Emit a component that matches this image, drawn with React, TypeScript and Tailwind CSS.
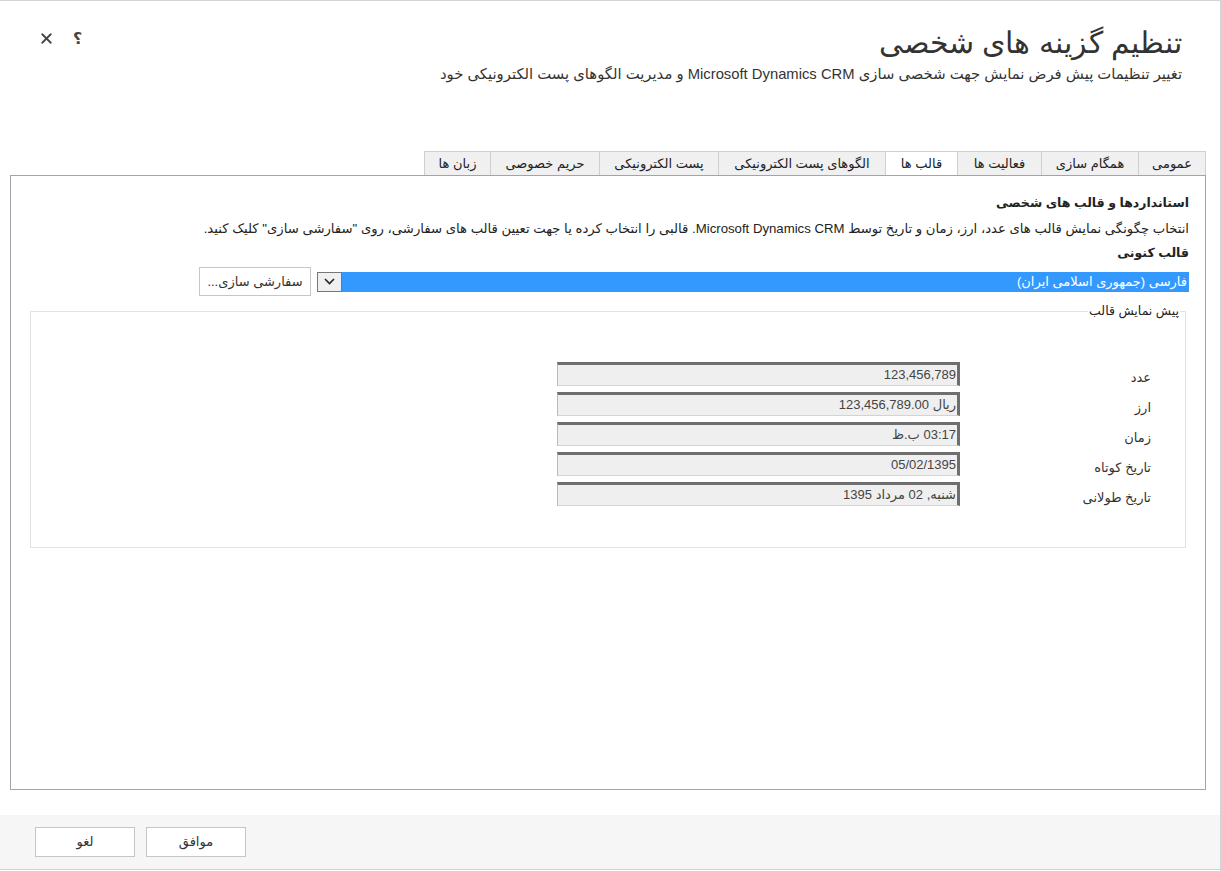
import { X } from "lucide-react";

const tabs = [
  { label: "عمومی", w: "w-[68px]" },
  { label: "همگام سازی", w: "w-[97px]" },
  { label: "فعالیت ها", w: "w-[84px]" },
  { label: "قالب ها", w: "w-[72px]", active: true },
  { label: "الگوهای پست الکترونیکی", w: "w-[167px]" },
  { label: "پست الکترونیکی", w: "w-[119px]" },
  { label: "حریم خصوصی", w: "w-[109px]" },
  { label: "زبان ها", w: "w-[66px]" },
];

const preview = [
  { label: "عدد", value: "123,456,789" },
  { label: "ارز", value: "ریال 123,456,789.00" },
  { label: "زمان", value: "03:17 ب.ظ" },
  { label: "تاریخ کوتاه", value: "05/02/1395" },
  { label: "تاریخ طولانی", value: "شنبه, 02 مرداد 1395" },
];

const App = () => {
  return (
    <div
      dir="rtl"
      className="w-[1221px] h-[871px] bg-white border-t border-r border-[#d4d4d4] text-[#222] overflow-hidden"
      style={{ fontFamily: '"Liberation Sans", "DejaVu Sans", sans-serif' }}
    >
      {/* header */}
      <div className="flex justify-between px-[38px] pt-[22px] h-[150px]">
        <div className="flex flex-col items-start">
          <h1 className="text-[30px] font-extralight leading-[40px] text-[#333]">تنظیم گزینه های شخصی</h1>
          <p className="text-[14.8px] leading-[20px] mt-[1px] text-[#333]">
            تغییر تنظیمات پیش فرض نمایش جهت شخصی سازی Microsoft Dynamics CRM و مدیریت الگوهای پست الکترونیکی خود
          </p>
        </div>
        <div className="flex gap-[18px] pt-[7px] h-fit items-center text-[#444]">
          <span className="text-[16px] font-bold leading-none">؟</span>
          <X size={17} strokeWidth={2.6} />
        </div>
      </div>

      {/* tabs + panel */}
      <div className="pr-[14px]">
        <div className="flex">
          {tabs.map((t) => (
            <div
              key={t.label}
              className={`${t.w} h-[24px] flex items-center justify-center text-[13px] border-t border-l border-[#cfcfcf] first:border-r ${
                t.active ? "bg-white" : "bg-[#f0f0f0]"
              }`}
            >
              {t.label}
            </div>
          ))}
        </div>
        <div className="w-[1196px] h-[615px] border border-[#a3a3ab] pt-[17px] pr-[16px] pl-[19px]">
          <div className="text-[12.5px] font-bold leading-[20px]">استانداردها و قالب های شخصی</div>
          <div className="text-[13.2px] leading-[20px] mt-[6px]">
            انتخاب چگونگی نمایش قالب های عدد، ارز، زمان و تاریخ توسط Microsoft Dynamics CRM. قالبی را انتخاب کرده یا جهت تعیین قالب های سفارشی، روی "سفارشی سازی" کلیک کنید.
          </div>
          <div className="text-[12.5px] font-bold leading-[20px] mt-[4px]">قالب کنونی</div>

          <div className="flex items-center mt-[4px]">
            <div className="w-[847px] h-[20px] bg-[#3399ff] text-white text-[13px] leading-[20px] pr-[2px]">
              فارسی (جمهوری اسلامی ایران)
            </div>
            <div className="w-[25px] h-[20px] border border-[#777] bg-[#f0f0f0] flex items-center justify-center">
              <svg width="11" height="7" viewBox="0 0 11 7">
                <path d="M1 1 L5.5 5.5 L10 1" fill="none" stroke="#222" strokeWidth="1.6" />
              </svg>
            </div>
            <button className="w-[112px] h-[29px] mr-[6px] border border-[#c6c6c6] bg-white text-[13px] text-[#333]">
              سفارشی سازی...
            </button>
          </div>

          <fieldset className="mt-[7px] mr-[3px] w-[1156px] h-[245px] border border-[#e2e2e2] pr-[6px]">
            <legend className="text-[12.5px] leading-[16px] px-[1px] mr-[-1px] bg-white">پیش نمایش قالب</legend>
            <div className="flex flex-col gap-[6px] mt-[43px]">
              {preview.map((r) => (
                <div key={r.label} className="flex h-[24px]">
                  <div className="w-[219px] pr-[28px] text-[13px] leading-[16px] pt-[8px] text-[#333]">{r.label}</div>
                  <div className="w-[403px] h-[24px] bg-[#efefef] border-t-[3px] border-r-[3px] border-l border-b border-t-[#6e6e6e] border-r-[#6e6e6e] border-l-[#b9b9b9] border-b-[#d3d3d3] text-[13px] leading-[20px] pr-[1px] text-[#444]">
                    {r.value}
                  </div>
                </div>
              ))}
            </div>
          </fieldset>
        </div>
      </div>

      {/* footer */}
      <div className="mt-[25px] h-[55px] bg-[#f6f6f6] border-b border-[#d2d2d2] flex items-center justify-end gap-[11px] pl-[35px]">
        <button className="w-[100px] h-[30px] border border-[#c6c6c6] bg-white text-[13px] text-[#333]">موافق</button>
        <button className="w-[100px] h-[30px] border border-[#c6c6c6] bg-white text-[13px] text-[#333]">لغو</button>
      </div>
    </div>
  );
};

export default App;
